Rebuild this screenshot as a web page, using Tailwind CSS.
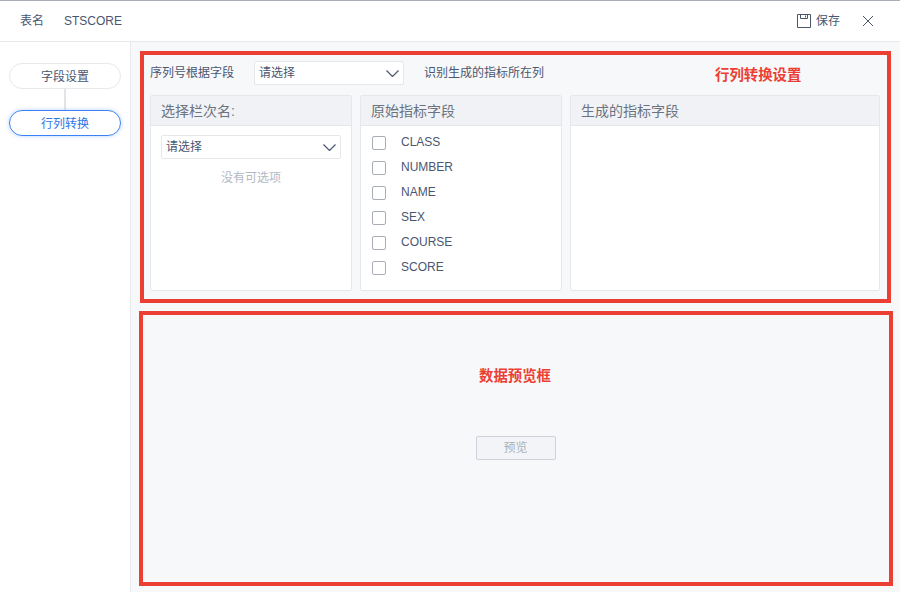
<!DOCTYPE html>
<html lang="zh">
  <head>
    <meta charset="UTF-8" />
    <title>行列转换</title>
    <script src="https://cdn.jsdelivr.net/npm/@tailwindcss/browser@4"></script>
  </head>
  <body>
    <div class="relative w-[900px] h-[592px] overflow-hidden flex flex-col bg-white text-[#4a5670] text-xs font-['Liberation_Sans','Noto_Sans_CJK_SC',sans-serif]">
      <!-- top bar -->
      <div class="h-[42px] shrink-0 flex items-center border-t border-t-[#a9adb5] border-b border-b-[#e8e9ec] pl-5 pr-[26px]">
        <span>表名</span>
        <span class="ml-5">STSCORE</span>
        <div class="ml-auto flex items-center">
          <svg class="w-[14px] h-[14px] mr-[5px] mb-[1px]" viewBox="0 0 14 14" fill="none" stroke="#4a5670" stroke-width="1">
            <path d="M.5.5h13v13H.5z" />
            <path d="M3.5.5v4h7v-4" />
            <path d="M8.5 1.5v2" />
          </svg>
          <span>保存</span>
          <svg class="w-[12px] h-[12px] ml-[22px]" viewBox="0 0 12 12" fill="none" stroke="#4a5670" stroke-width="1">
            <path d="M1 1l10 10M11 1L1 11" />
          </svg>
        </div>
      </div>

      <div class="flex flex-1 min-h-0">
        <!-- left steps -->
        <div class="w-[131px] shrink-0 border-r border-r-[#e8e9ec] pt-[21px] pl-[9px]">
          <div class="w-[112px] h-[26px] pt-[2px] rounded-[13px] border border-[#e8e9ec] flex items-center justify-center">字段设置</div>
          <div class="w-[2px] h-[21px] bg-[#e3e4e8] ml-[55px]"></div>
          <div class="w-[112px] h-[26px] pt-[2px] rounded-[13px] border border-[#3b82f6] shadow-[0_0_4px_rgba(59,130,246,0.35)] flex items-center justify-center text-[#2f74e8]">行列转换</div>
        </div>

        <!-- main -->
        <div class="flex-1 bg-[#f7f8fa]">
          <div class="h-[259px] pl-[19px] pr-[10px] pt-[19px]">
            <div class="flex items-center h-[24px]">
              <span class="w-[104px]">序列号根据字段</span>
              <div class="w-[150px] h-[24px] bg-white border border-[#e6e7eb] rounded-[2px] flex items-center justify-between pl-[4px] pr-[4px]">
                <span>请选择</span>
                <svg class="w-[13px] h-[7px]" viewBox="0 0 13 7" fill="none" stroke="#4a5670" stroke-width="1.2"><path d="M.5.5l6 6 6-6" /></svg>
              </div>
              <span class="ml-5">识别生成的指标所在列</span>
            </div>

            <div class="flex gap-2 mt-[10px] h-[196px]">
              <div class="w-[202px] bg-white border border-[#e6e7eb] rounded-[2px]">
                <div class="h-[30px] bg-[#f1f2f6] border-b border-b-[#e6e7eb] pl-[10px] flex items-center text-sm text-[#6b7280]">选择栏次名:</div>
                <div class="px-[10px] pt-[9px]">
                  <div class="h-[24px] border border-[#e6e7eb] rounded-[2px] flex items-center justify-between pl-[4px] pr-[4px]">
                    <span>请选择</span>
                    <svg class="w-[13px] h-[7px]" viewBox="0 0 13 7" fill="none" stroke="#4a5670" stroke-width="1.2"><path d="M.5.5l6 6 6-6" /></svg>
                  </div>
                  <div class="mt-[11px] text-center text-[#b3b9c4]">没有可选项</div>
                </div>
              </div>

              <div class="w-[202px] bg-white border border-[#e6e7eb] rounded-[2px]">
                <div class="h-[30px] bg-[#f1f2f6] border-b border-b-[#e6e7eb] pl-[10px] flex items-center text-sm text-[#6b7280]">原始指标字段</div>
                <div class="pl-[11px] pt-[4px]">
                  <label class="h-[25px] flex items-center"><span class="w-[14px] h-[14px] border border-[#a8adb8] rounded-[2px] mr-[15px]"></span><span class="mb-[2px]">CLASS</span></label>
                  <label class="h-[25px] flex items-center"><span class="w-[14px] h-[14px] border border-[#a8adb8] rounded-[2px] mr-[15px]"></span><span class="mb-[2px]">NUMBER</span></label>
                  <label class="h-[25px] flex items-center"><span class="w-[14px] h-[14px] border border-[#a8adb8] rounded-[2px] mr-[15px]"></span><span class="mb-[2px]">NAME</span></label>
                  <label class="h-[25px] flex items-center"><span class="w-[14px] h-[14px] border border-[#a8adb8] rounded-[2px] mr-[15px]"></span><span class="mb-[2px]">SEX</span></label>
                  <label class="h-[25px] flex items-center"><span class="w-[14px] h-[14px] border border-[#a8adb8] rounded-[2px] mr-[15px]"></span><span class="mb-[2px]">COURSE</span></label>
                  <label class="h-[25px] flex items-center"><span class="w-[14px] h-[14px] border border-[#a8adb8] rounded-[2px] mr-[15px]"></span><span class="mb-[2px]">SCORE</span></label>
                </div>
              </div>

              <div class="w-[310px] bg-white border border-[#e6e7eb] rounded-[2px]">
                <div class="h-[30px] bg-[#f1f2f6] border-b border-b-[#e6e7eb] pl-[10px] flex items-center text-sm text-[#6b7280]">生成的指标字段</div>
              </div>
            </div>
          </div>

          <!-- preview -->
          <div class="flex justify-center pt-[135px]">
            <div class="w-[80px] h-[24px] bg-[#f3f4f7] border border-[#cdd1da] rounded-[2px] flex items-center justify-center text-[#aab0bb]">预览</div>
          </div>
        </div>
      </div>

      <!-- red annotations laid over the screenshot -->
      <div class="absolute left-[140px] top-[51px] w-[751px] h-[252px] border-4 border-[#ec3f33]"></div>
      <div class="absolute left-[139px] top-[311px] w-[754px] h-[275px] border-4 border-[#ec3f33]"></div>
      <div class="absolute left-[715px] top-[66px] text-[14.4px] font-bold text-[#ec3f33]">行列转换设置</div>
      <div class="absolute left-[479px] top-[367px] text-[14.4px] font-bold text-[#ec3f33]">数据预览框</div>
    </div>
  </body>
</html>
